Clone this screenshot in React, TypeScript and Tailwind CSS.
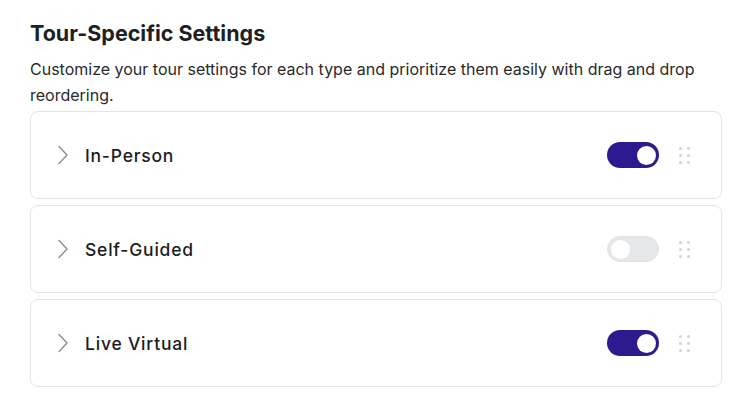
import React from "react";

type Tour = { label: string; enabled: boolean };

const tours: Tour[] = [
    { label: "In-Person", enabled: true },
    { label: "Self-Guided", enabled: false },
    { label: "Live Virtual", enabled: true },
];

const Toggle: React.FC<{ on: boolean }> = ({ on }) => (
    <span
        className={`flex items-center w-[52px] h-[26px] rounded-full px-[3px] ${
            on ? "bg-[#2d1a8f] justify-end" : "bg-[#e5e8eb] border border-[#dfe3e7] justify-start"
        }`}
    >
        <span className="block w-[19px] h-[19px] rounded-full bg-white" />
    </span>
);

const DragHandle: React.FC = () => (
    <span className="grid grid-cols-2 gap-x-[5px] gap-y-[4px]">
        {Array.from({ length: 6 }).map((_, i) => (
            <span key={i} className="block w-[3px] h-[3px] rounded-full bg-[#cfd2d8]" />
        ))}
    </span>
);

const TourRow: React.FC<{ tour: Tour }> = ({ tour }) => (
    <li className="flex items-center h-[88px] border border-[#e3e4e8] rounded-[8px] pl-[26px] pr-[31px]">
        <svg width="12" height="20" viewBox="0 0 12 20" fill="none" className="mr-[16px]">
            <path d="M2 1.5 L10 10 L2 18.5" stroke="#8a909a" strokeWidth="1.4" strokeLinecap="round" strokeLinejoin="round" />
        </svg>
        <span className="text-[17.5px] font-medium tracking-[0.045em] leading-[24px] pt-[1px] text-[#1c1c1e] flex-1">
            {tour.label}
        </span>
        <Toggle on={tour.enabled} />
        <span className="ml-[20px]">
            <DragHandle />
        </span>
    </li>
);

const App: React.FC = () => {
    return (
        <div className="w-[749px] h-[409px] bg-white font-['Inter',sans-serif] px-[30px] pt-[19px]">
            <h2 className="text-[21.5px] font-bold leading-[28px] text-[#1f1f1f]">Tour-Specific Settings</h2>
            <p className="mt-[9px] text-[16px] leading-[26px] text-[#2a2a2a]">
                Customize your tour settings for each type and prioritize them easily with drag and drop
                reordering.
            </p>
            <ul className="mt-[3px] flex flex-col gap-[6px] w-[692px]">
                {tours.map((t) => (
                    <TourRow key={t.label} tour={t} />
                ))}
            </ul>
        </div>
    );
};

export default App;
